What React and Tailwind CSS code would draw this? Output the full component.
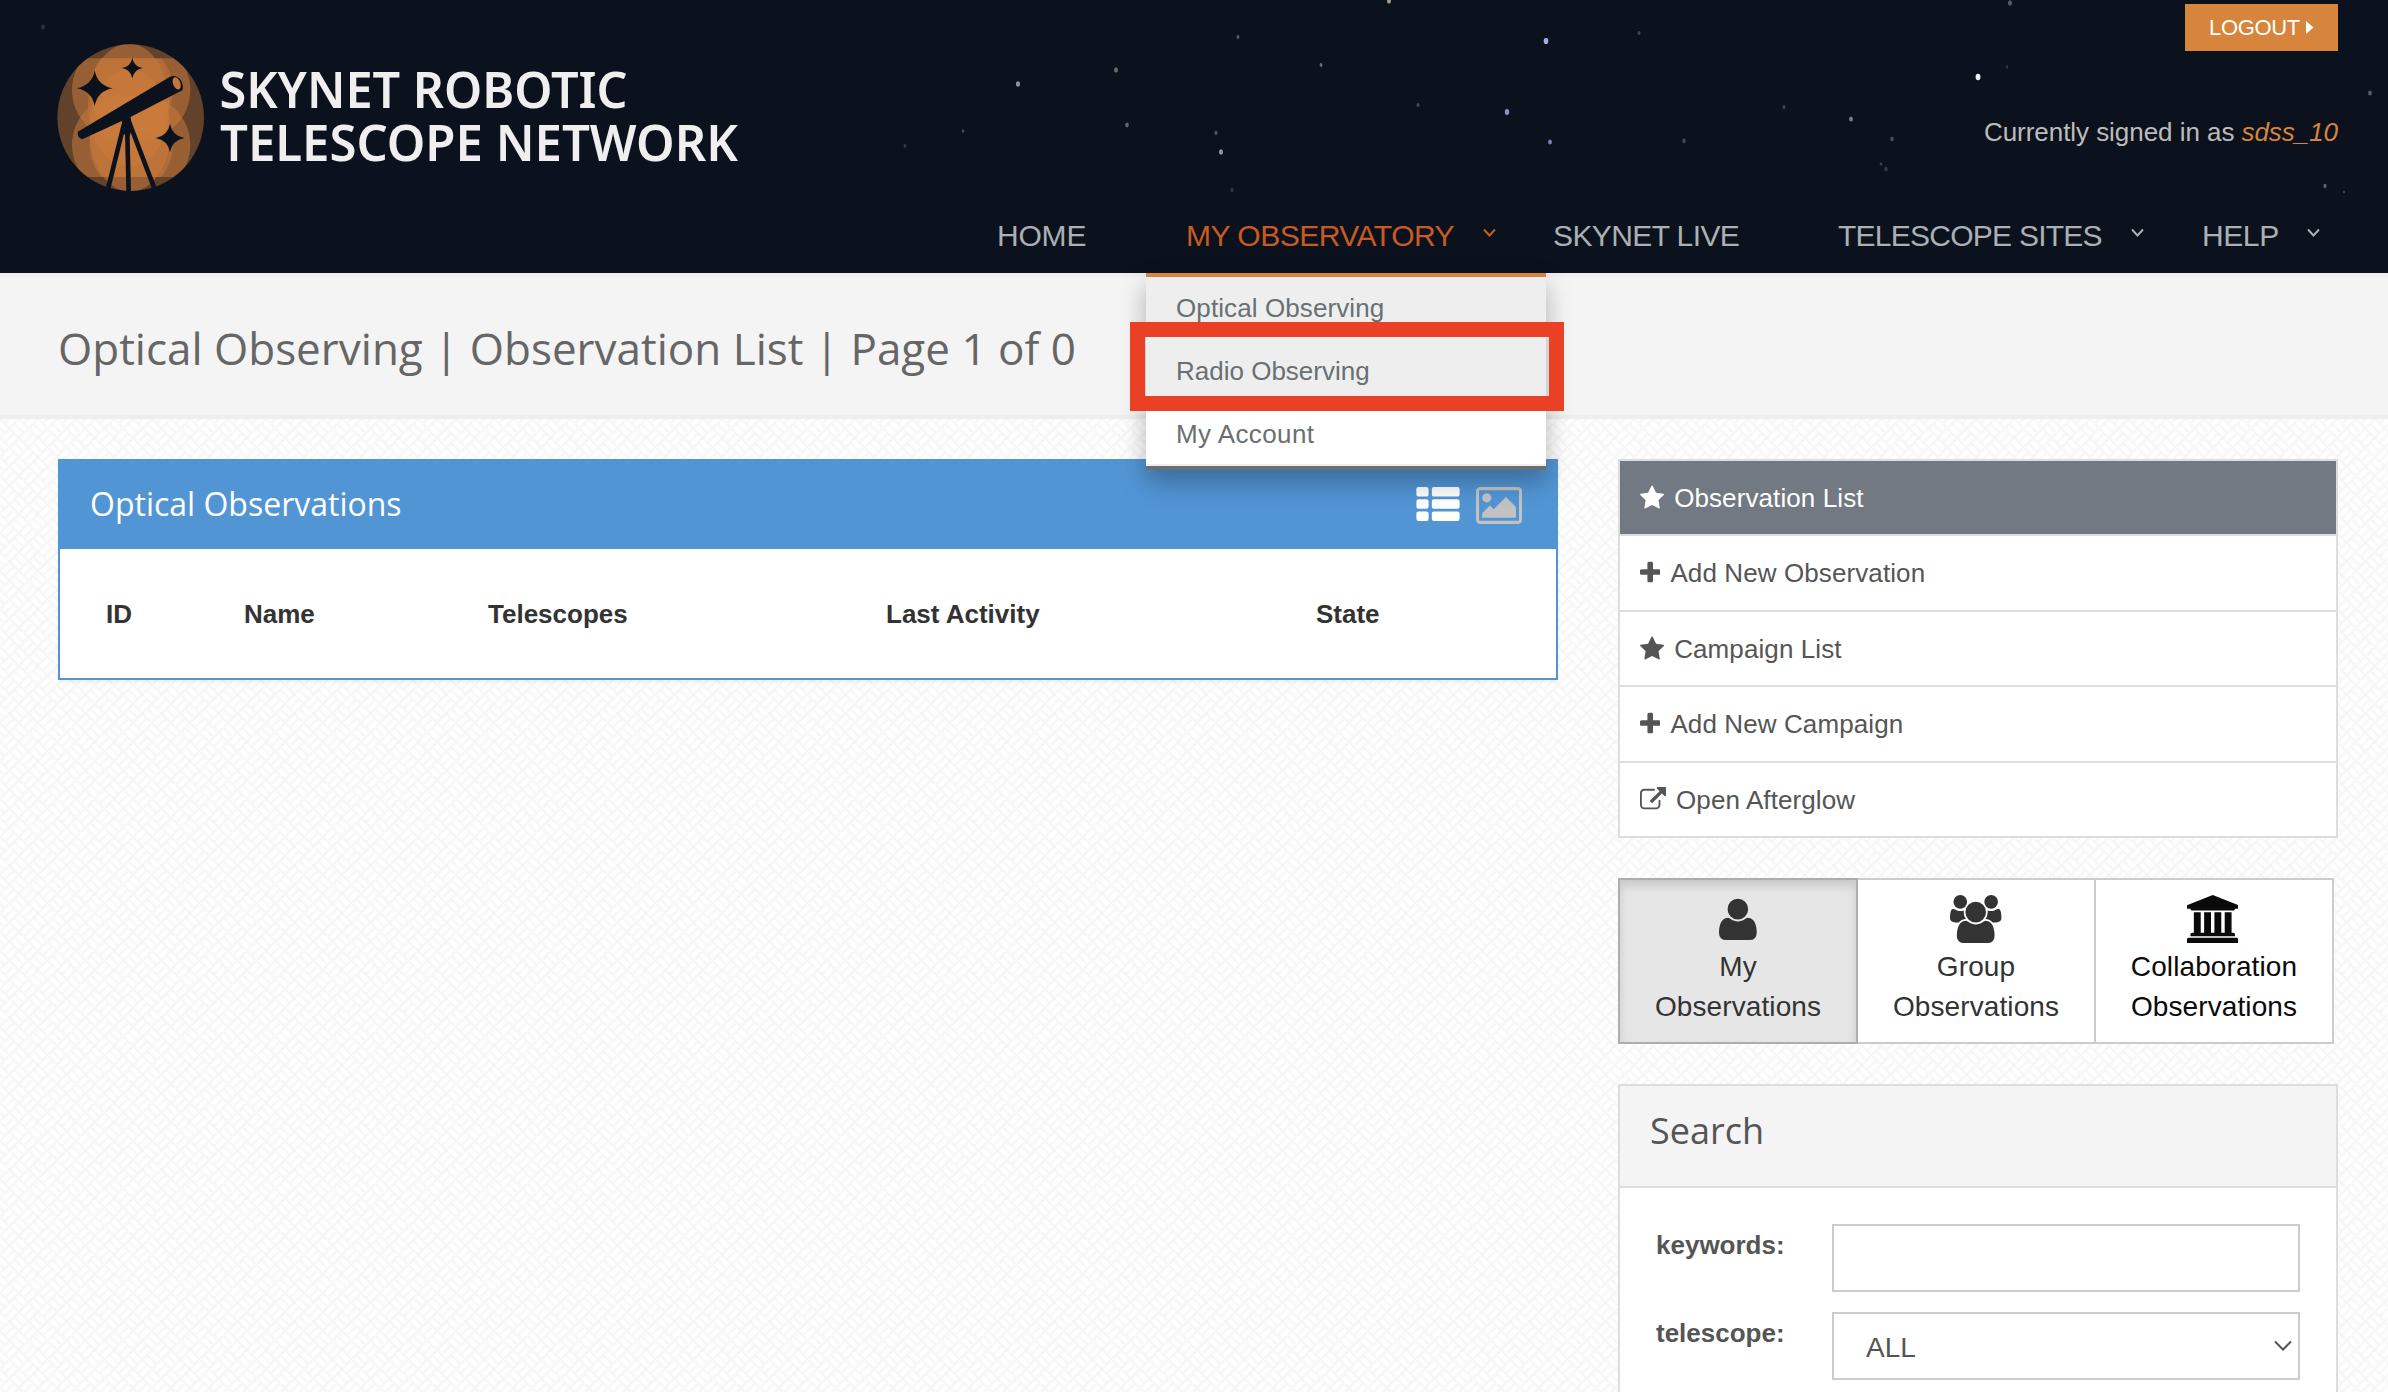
import React from "react";

const ICONS = {
  star: {
    w: 1664, x: 64,
    d: "M1728 647q0 22-26 48l-363 354 86 500q1 7 1 20 0 21-10.5 35.5t-30.5 14.5q-19 0-40-12l-449-236-449 236q-22 12-40 12-21 0-31.5-14.5t-10.5-35.5q0-6 2-20l86-500-364-354q-25-27-25-48 0-37 56-46l502-73 225-455q19-41 49-41t49 41l225 455 502 73q56 9 56 46z",
  },
  plus: {
    w: 1408, x: 192,
    d: "M1600 736v192q0 40-28 68t-68 28h-416v416q0 40-28 68t-68 28h-192q-40 0-68-28t-28-68v-416h-416q-40 0-68-28t-28-68v-192q0-40 28-68t68-28h416v-416q0-40 28-68t68-28h192q40 0 68 28t28 68v416h416q40 0 68 28t28 68z",
  },
  external: {
    w: 1792, x: 0,
    d: "M1408 928v320q0 119-84.5 203.5t-203.5 84.5h-832q-119 0-203.5-84.5t-84.5-203.5v-832q0-119 84.5-203.5t203.5-84.5h704q14 0 23 9t9 23v64q0 14-9 23t-23 9h-704q-66 0-113 47t-47 113v832q0 66 47 113t113 47h832q66 0 113-47t47-113v-320q0-14 9-23t23-9h64q14 0 23 9t9 23zm384-864v512q0 26-19 45t-45 19-45-19l-176-176-652 652q-10 10-23 10t-23-10l-114-114q-10-10-10-23t10-23l652-652-176-176q-19-19-19-45t19-45 45-19h512q26 0 45 19t19 45z",
  },
  user: {
    w: 1408, x: 256,
    d: "M1664 1533q0 120-73 189.5t-194 69.5h-874q-121 0-194-69.5t-73-189.5q0-53 3.5-103.5t14-109 26.5-108.5 43-97.5 62-81 85.5-53.5 111.5-20q10 0 43 21.5t73 48 107 48 135 21.5 135-21.5 107-48 73-48 43-21.5q61 0 111.5 20t85.5 53.5 62 81 43 97.5 26.5 108.5 14 109 3.5 103.5zM1344 640q0 159-112.5 271.5t-271.5 112.5-271.5-112.5-112.5-271.5 112.5-271.5 271.5-112.5 271.5 112.5 112.5 271.5z",
  },
  users: {
    w: 1920, x: 0,
    d: "M593 896q-162 5-265 128h-134q-82 0-138-40.5t-56-118.5q0-353 124-353 6 0 43.5 21t97.5 42.5 119 21.5q67 0 133-23-5 37-5 66 0 139 81 256zm1071 637q0 120-73 189.5t-194 69.5h-874q-121 0-194-69.5t-73-189.5q0-53 3.5-103.5t14-109 26.5-108.5 43-97.5 62-81 85.5-53.5 111.5-20q10 0 43 21.5t73 48 107 48 135 21.5 135-21.5 107-48 73-48 43-21.5q61 0 111.5 20t85.5 53.5 62 81 43 97.5 26.5 108.5 14 109 3.5 103.5zm-1024-1277q0 106-75 181t-181 75-181-75-75-181 75-181 181-75 181 75 75 181zm704 384q0 159-112.5 271.5t-271.5 112.5-271.5-112.5-112.5-271.5 112.5-271.5 271.5-112.5 271.5 112.5 112.5 271.5zm576 225q0 78-56 118.5t-138 40.5h-134q-103-123-265-128 81-117 81-256 0-29-5-66 66 23 133 23 59 0 119-21.5t97.5-42.5 43.5-21q124 0 124 353zm-128-609q0 106-75 181t-181 75-181-75-75-181 75-181 181-75 181 75 75 181z",
  },
  university: {
    w: 1920, x: 0,
    d: "M960 0l960 384v128h-128q0 26-20.5 45t-48.5 19h-1526q-28 0-48.5-19t-20.5-45h-128v-128zm-704 640h256v768h128v-768h256v768h128v-768h256v768h128v-768h256v768h59q28 0 48.5 19t20.5 45v64h-1664v-64q0-26 20.5-45t48.5-19h59v-768zm1595 960q28 0 48.5 19t20.5 45v128h-1920v-128q0-26 20.5-45t48.5-19h1782z",
  },
  picture: {
    w: 1920, x: 0,
    d: "M640 576q0 80-56 136t-136 56-136-56-56-136 56-136 136-56 136 56 56 136zm1024 384v448h-1408v-192l320-320 160 160 512-512zm96-704h-1600q-13 0-22.5 9.5t-9.5 22.5v1216q0 13 9.5 22.5t22.5 9.5h1600q13 0 22.5-9.5t9.5-22.5v-1216q0-13-9.5-22.5t-22.5-9.5zm160 32v1216q0 66-47 113t-113 47h-1600q-66 0-113-47t-47-113v-1216q0-66 47-113t113-47h1600q66 0 113 47t47 113z",
  },
};

function Icon({ name, size, className = "" }) {
  const { w, x, d } = ICONS[name];
  return (
    <svg
      className={"shrink-0 " + className}
      width={(size * w) / 1792}
      height={size}
      viewBox={`${x} 0 ${w} 1792`}
      fill="currentColor"
    >
      <path d={d} />
    </svg>
  );
}

function Chevron({ className = "" }) {
  return (
    <svg className={"mb-[6px] " + className} width="13" height="10" viewBox="0 0 13 10" fill="none" stroke="currentColor" strokeWidth="2">
      <path d="M1 1.5 6.5 7.5 12 1.5" />
    </svg>
  );
}

const SKY = [
  [43, 27, 2, "#2c3443"], [1389, 1, 2.2, "#a39a94"], [1238, 37, 1.6, "#555b68"], [1546, 41, 2.6, "#9fb0ea"],
  [1321, 65, 1.6, "#6a7080"], [1116, 70, 2.2, "#6d6864"], [1018, 84, 2.3, "#8d929a"], [1418, 105, 1.7, "#4c4848"],
  [1507, 112, 2.4, "#8a93cf"], [1127, 125, 2, "#60656e"], [1216, 133, 1.8, "#4c525e"], [963, 131, 1.4, "#474d59"],
  [905, 146, 1.6, "#343844"], [1221, 152, 2.2, "#9b9aa4"], [1550, 142, 2.1, "#7b86ad"], [1232, 190, 1.8, "#33373f"],
  [1639, 33, 1.7, "#41454f"], [2010, 3, 2.2, "#5c5a5a"], [1978, 77, 2.7, "#f2f2f6"], [2007, 67, 1.5, "#33363f"],
  [1784, 107, 1.7, "#41444d"], [1851, 119, 2.1, "#7a7c99"], [1684, 141, 2, "#3e4650"], [1892, 139, 2, "#474a54"],
  [1881, 164, 1.5, "#3a404c"], [1886, 169, 1.9, "#3f3a42"], [2370, 93, 2.1, "#585c64"], [2325, 186, 1.8, "#5b626c"],
  [2344, 192, 1.1, "#3f444d"],
];

function Sparkle({ x, y, r }) {
  const k = r * 0.15;
  return (
    <path
      fill="#0c121d"
      d={`M${x} ${y - r}Q${x + k} ${y - k} ${x + r} ${y}Q${x + k} ${y + k} ${x} ${y + r}Q${x - k} ${y + k} ${x - r} ${y}Q${x - k} ${y - k} ${x} ${y - r}Z`}
    />
  );
}

function Logo() {
  return (
    <div className="flex">
      <svg className="h-[170px] w-[160px]" viewBox="0 0 480 510">
        <defs>
          <clipPath id="disc"><circle cx="242" cy="263" r="220" /></clipPath>
          <clipPath id="band"><rect x="0" y="85" width="480" height="356" /></clipPath>
        </defs>
        <g clipPath="url(#disc)">
          <rect width="480" height="510" fill="#62422b" />
          <g fill="#cb7c3c" fillOpacity="0.5">
            <g clipPath="url(#band)">
              <circle cx="217" cy="180" r="151" />
              <circle cx="270" cy="180" r="151" />
              <circle cx="217" cy="345" r="151" />
              <circle cx="270" cy="345" r="151" />
            </g>
            <ellipse cx="236" cy="225" rx="122" ry="184" />
            <ellipse cx="240" cy="302" rx="122" ry="184" />
          </g>
        </g>
        <Sparkle x={134} y={175} r={54} />
        <Sparkle x={247} y={114} r={31} />
        <Sparkle x={360} y={324} r={43} />
        <path fill="#0c121d" d="M86 304 360 140Q378 133 392 150 402 168 397 181L240 262 100 326Q92 329 86 320 80 310 86 304Z" />
        <ellipse cx="380" cy="160" rx="11" ry="19" transform="rotate(-22 380 160)" fill="#c3783b" />
        <path d="M225 270 175 473M231 270 236 485M235 270 312 472" stroke="#0c121d" strokeWidth="14" />
        <path fill="#0c121d" d="M216 262 242 262 246 296 238 320 216 310Z" />
      </svg>
      <svg className="ml-[6px] mt-[10px] h-[160px] w-[540px] overflow-visible" viewBox="216 40 540 160" fill="#efefef" fontFamily="Noto Sans" fontWeight="600" fontSize="50.5">
        <text x="219.5" y="107.5" textLength="408" lengthAdjust="spacingAndGlyphs">SKYNET ROBOTIC</text>
        <text x="220" y="160.5" textLength="518" lengthAdjust="spacingAndGlyphs">TELESCOPE NETWORK</text>
      </svg>
    </div>
  );
}

function Header() {
  return (
    <header className="relative h-[273px] shrink-0 bg-[#0c121d]">
      <svg className="absolute inset-0 h-full w-full" viewBox="0 0 2388 273">
        {SKY.map(([x, y, r, c]) => (
          <ellipse key={x + "-" + y} cx={x} cy={y} rx={r * 0.9} ry={r * 1.2} fill={c} />
        ))}
      </svg>
      <div className="relative flex h-[216px] justify-between px-[50px]">
        <div className="pt-[30px]"><Logo /></div>
        <div className="flex flex-col items-end pt-1">
          <button className="flex h-[47px] w-[153px] items-center bg-[#d7843c] pl-[24px] text-[22px] text-white">
            <span className="tracking-[-0.35px]">LOGOUT</span>
            <svg className="mb-px ml-[6px]" width="8" height="13" viewBox="0 0 8 13" fill="currentColor"><path d="M0 0 7.5 6.5 0 13Z" /></svg>
          </button>
          <p className="mt-[61px] text-[26px] leading-[40px] tracking-[-0.05px] text-[#bcbcbc]">
            Currently signed in as <em className="text-[#d7843c]">sdss_10</em>
          </p>
        </div>
      </div>
      <nav className="relative flex pl-[997px] text-[30px] leading-[40px] text-[#aab0b4]">
        <a className="w-[189px] tracking-[-0.2px]">HOME</a>
        <a className="flex w-[367px] items-center tracking-[-0.5px] text-[#c85a22]">MY OBSERVATORY<Chevron className="ml-[29px]" /></a>
        <a className="w-[285px] tracking-[-0.6px]">SKYNET LIVE</a>
        <a className="flex w-[364px] items-center tracking-[-0.75px]">TELESCOPE SITES<Chevron className="ml-[29px]" /></a>
        <a className="flex items-center tracking-[-0.4px]">HELP<Chevron className="ml-[28px]" /></a>
      </nav>
      <div className="absolute left-[1146px] top-[273px] z-20 h-[197px] w-[400px] border-b-4 border-t-4 border-b-[#687074] border-t-[#d7843c] bg-white text-[26px] tracking-[0.1px] text-[#687074] shadow-[0_12px_24px_rgba(0,0,0,0.28)]">
        <div className="h-[63px] bg-[#eee] pl-[30px] pt-[11px] leading-[40px]">Optical Observing</div>
        <div className="h-[63px] bg-[#eee] pl-[30px] pt-[11px] leading-[40px] tracking-normal">Radio Observing</div>
        <div className="h-[63px] border-b-2 border-[#eee] pl-[30px] pt-[11px] leading-[40px] tracking-[0.4px]">My Account</div>
      </div>
      <div className="absolute left-[1130px] top-[322px] z-30 h-[89px] w-[434px] border-[15px] border-[#ea4025]" />
    </header>
  );
}

function Weave() {
  return (
    <svg className="absolute inset-0 h-full w-full">
      <defs>
        <pattern id="weave" width="26.87" height="26.87" patternUnits="userSpaceOnUse" patternTransform="rotate(45)">
          <rect width="26.87" height="26.87" fill="#fefefe" />
          <path
            d="M0 0H26.87M0 13.43H26.87M0 26.87H26.87M0 0V26.87M13.43 0V26.87M26.87 0V26.87M0 6.7H13.43M13.43 20.1H26.87M20.1 0V13.43M6.7 13.43V26.87"
            stroke="#f6f6f6" strokeWidth="2" fill="none"
          />
        </pattern>
      </defs>
      <rect width="100%" height="100%" fill="url(#weave)" />
    </svg>
  );
}

const MENU = [
  ["star", "Observation List", "h-[75px] bg-[#727983] text-white"],
  ["plus", "Add New Observation", "h-[76px]"],
  ["star", "Campaign List", "h-[75px]"],
  ["plus", "Add New Campaign", "h-[76px]"],
  ["external", "Open Afterglow", "h-[75px]"],
];

export default function App() {
  return (
    <div className="flex h-[1392px] w-[2388px] flex-col overflow-hidden bg-[#fdfdfd] font-['Liberation_Sans',Arial,sans-serif]">
      <Header />
      <div className="h-[146px] shrink-0 border-y-4 border-[#eee] bg-[#f4f4f4] pl-[58px] pt-[41px]">
        <h1 className="font-['Open_Sans',sans-serif] text-[44px] leading-[60px] text-[#666]">Optical Observing | Observation List | Page 1 of 0</h1>
      </div>
      <main className="relative min-h-0 flex-1 overflow-hidden">
        <Weave />
        <div className="relative flex items-start gap-[60px] pl-[58px] pt-[40px]">
          <section className="h-[221px] w-[1500px] border-x-2 border-b-2 border-[#5295d5] bg-white shadow-[0_2px_3px_rgba(0,0,0,0.06)]">
            <div className="flex h-[90px] justify-between bg-[#5295d5] pl-[30px] pr-[34px] text-white">
              <h2 className="pt-[22px] font-['Open_Sans',sans-serif] text-[32px] leading-[46px]">Optical Observations</h2>
              <div className="flex gap-[16px] pt-[25px]">
                <svg className="mt-[3px]" width="44" height="34" viewBox="0 0 44 34" fill="currentColor">
                  {[0, 12.2, 24.4].map((y) => (
                    <g key={y}>
                      <rect x="0.4" y={y} width="12.2" height="9.6" rx="2.2" />
                      <rect x="15.8" y={y} width="27.8" height="9.6" rx="2.2" />
                    </g>
                  ))}
                </svg>
                <Icon name="picture" size={43} className="text-[#c2c2c2]" />
              </div>
            </div>
            <div className="flex pl-[46px] pt-[45px] text-[26px] font-bold leading-[40px] text-[#333]">
              <span className="w-[138px]">ID</span>
              <span className="w-[244px]">Name</span>
              <span className="w-[398px]">Telescopes</span>
              <span className="w-[430px]">Last Activity</span>
              <span>State</span>
            </div>
          </section>
          <aside className="w-[720px]">
            <ul className="border-x-2 border-t-2 border-[#ddd] text-[26px] tracking-[0.1px] text-[#555]">
              {MENU.map(([icon, label, cls], i) => (
                <li key={label} className={"flex border-b-2 border-[#ddd] pl-5 pt-[17px] leading-[40px] " + (i ? "bg-white " : "") + cls}>
                  <Icon name={icon} size={26} className="mt-[7px]" />
                  <span className="ml-[10px]">{label}</span>
                </li>
              ))}
            </ul>
            <div className="mt-[40px] flex h-[166px] text-center text-[28px] leading-[40px] tracking-[0.1px] text-[#333]">
              <div className="flex w-[240px] flex-col items-center border-2 border-[#adadad] bg-[#e6e6e6] pt-[15px] shadow-[inset_0_6px_10px_rgba(0,0,0,0.125)]">
                <Icon name="user" size={48} className="-mt-[3px]" />
                <span className="mt-[7px]">My<br />Observations</span>
              </div>
              <div className="flex w-[236px] flex-col items-center border-y-2 border-[#ccc] bg-white pt-[15px]">
                <Icon name="users" size={48} />
                <span className="mt-[4px]">Group<br />Observations</span>
              </div>
              <div className="flex w-[240px] flex-col items-center border-2 border-[#ccc] bg-white pt-[15px] text-[#0a0a0a]">
                <Icon name="university" size={48} className="mr-[3px]" />
                <span className="mt-[4px]">Collaboration<br />Observations</span>
              </div>
            </div>
            <section className="mt-[40px] border-2 border-[#ddd] bg-white text-[#555]">
              <h3 className="h-[102px] border-b-2 border-[#ddd] bg-[#f4f4f4] pl-[30px] pt-[20px] font-['Open_Sans',sans-serif] text-[36px] leading-[50px]">Search</h3>
              <div className="px-9 pt-[36px]">
                <div className="flex h-[88px] justify-between">
                  <label className="pt-px text-[26px] font-bold leading-[40px]">keywords:</label>
                  <div className="h-[68px] w-[468px] border-2 border-[#ccc] bg-white" />
                </div>
                <div className="flex h-[120px] justify-between">
                  <label className="pt-px text-[26px] font-bold leading-[40px]">telescope:</label>
                  <div className="flex h-[68px] w-[468px] items-center justify-between border-2 border-[#ccc] bg-white pl-8 pr-[6px] text-[28px]">
                    <span className="pt-[3px]">ALL</span>
                    <svg width="18" height="12" viewBox="0 0 18 12" fill="none" stroke="currentColor" strokeWidth="2"><path d="M1 1.5 9 9.5 17 1.5" /></svg>
                  </div>
                </div>
              </div>
            </section>
          </aside>
        </div>
      </main>
    </div>
  );
}
